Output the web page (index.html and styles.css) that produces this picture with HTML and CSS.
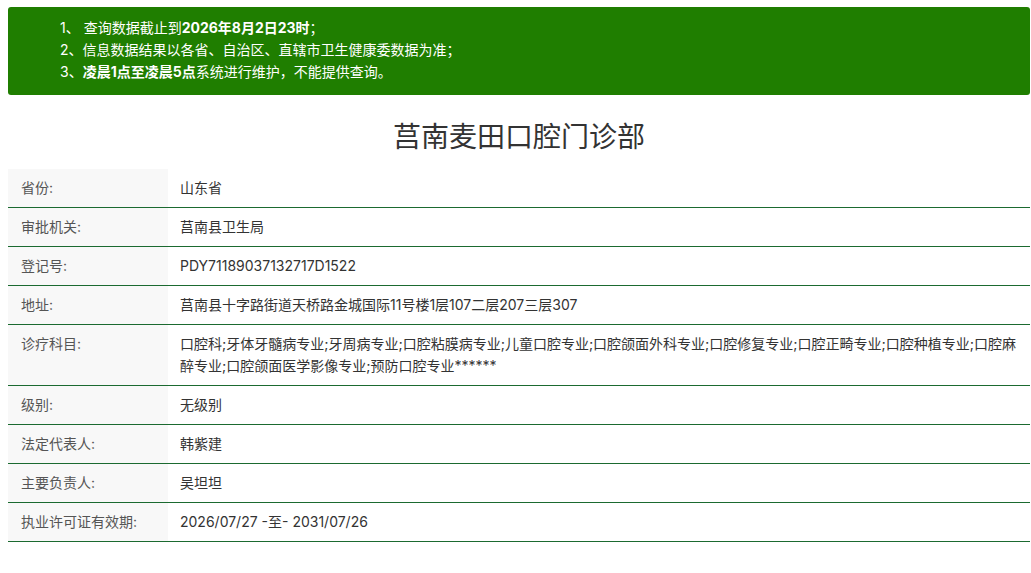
FILE: index.html
```html
<!DOCTYPE html>
<html lang="zh-CN">
<head>
<meta charset="utf-8">
<title>莒南麦田口腔门诊部</title>
<link rel="stylesheet" href="styles.css">
</head>
<body>
<div class="page">
  <div class="notice">
    <p>1、 查询数据截止到<b>2026年8月2日23时</b>；</p>
    <p>2、信息数据结果以各省、自治区、直辖市卫生健康委数据为准；</p>
    <p>3、<b>凌晨1点至凌晨5点</b>系统进行维护，不能提供查询。</p>
  </div>
  <h1 class="title">莒南麦田口腔门诊部</h1>
  <div class="info">
    <div class="row"><div class="label">省份:</div><div class="value">山东省</div></div>
    <div class="row"><div class="label">审批机关:</div><div class="value">莒南县卫生局</div></div>
    <div class="row"><div class="label">登记号:</div><div class="value">PDY71189037132717D1522</div></div>
    <div class="row"><div class="label">地址:</div><div class="value">莒南县十字路街道天桥路金城国际11号楼1层107二层207三层307</div></div>
    <div class="row"><div class="label">诊疗科目:</div><div class="value">口腔科;牙体牙髓病专业;牙周病专业;口腔粘膜病专业;儿童口腔专业;口腔颌面外科专业;口腔修复专业;口腔正畸专业;口腔种植专业;口腔麻醉专业;口腔颌面医学影像专业;预防口腔专业******</div></div>
    <div class="row"><div class="label">级别:</div><div class="value">无级别</div></div>
    <div class="row"><div class="label">法定代表人:</div><div class="value">韩紫建</div></div>
    <div class="row"><div class="label">主要负责人:</div><div class="value">吴坦坦</div></div>
    <div class="row"><div class="label">执业许可证有效期:</div><div class="value">2026/07/27 -至- 2031/07/26</div></div>
  </div>
</div>
</body>
</html>
```

FILE: styles.css
```css
html, body {
  margin: 0;
  padding: 0;
  background: #fff;
}
body {
  font-family: Inter, "Noto Sans CJK SC", sans-serif;
  font-size: 14px;
  color: #333;
}
.page {
  margin: 7px 1px 0 8px;
}
.notice {
  background: #1f7e00;
  color: #fff;
  border-radius: 3px;
  padding: 10px 0 12px 52px;
}
.notice p {
  margin: 0;
  line-height: 22px;
}
.notice b {
  font-weight: 700;
}
.title {
  margin: 22px 0 12px;
  text-align: center;
  font-size: 28px;
  line-height: 40px;
  font-weight: 400;
  color: #333;
}
.info {
  display: flex;
  flex-direction: column;
}
.row {
  display: flex;
  border-bottom: 1px solid #1b6a30;
}
.label {
  flex: 0 0 160px;
  box-sizing: border-box;
  background: #f8f8f8;
  color: #555;
  padding: 8px 12px 8px 13px;
  line-height: 22px;
}
.value {
  flex: 1;
  padding: 8px 12px;
  line-height: 22px;
  color: #333;
}
```
